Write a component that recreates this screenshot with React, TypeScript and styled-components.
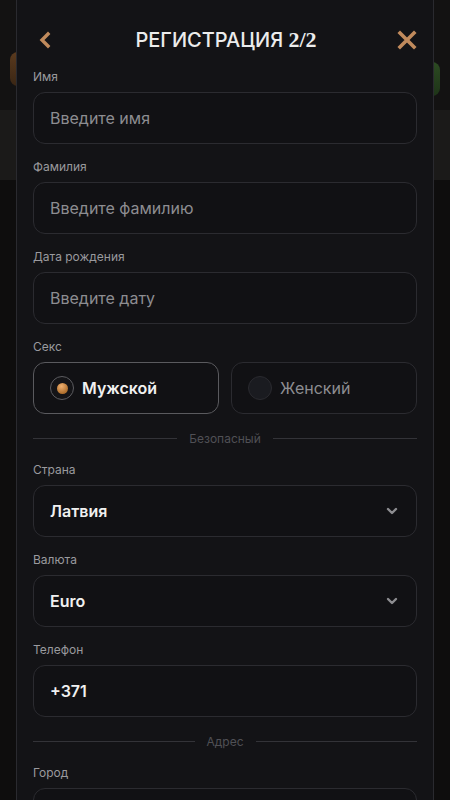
import React from "react";
import styled, { createGlobalStyle } from "styled-components";

const Global = createGlobalStyle`
  * { box-sizing: border-box; }
  html, body { margin: 0; padding: 0; background: #0e0d0d; overflow: hidden; }
  body { font-family: Inter, "Noto Sans", sans-serif; color: #e8e8e8; }
`;

const Page = styled.div`
  height: 800px;
  display: flex;
  flex-direction: column;
  background: #0e0d0d;
`;

const PageHeader = styled.div`
  height: 110px;
  background: #131212;
  display: flex;
  justify-content: space-between;
  padding: 24px 10px 0 10px;
`;

const HeaderSide = styled.div`
  display: flex;
  flex-direction: column;
  gap: 14px;
`;

const Dots = styled.div`
  color: #3a3a3a;
  font-size: 14px;
  line-height: 14px;
  padding-left: 4px;
`;

const BgButton = styled.div<{ $tone: "orange" | "green" }>`
  width: 60px;
  height: 34px;
  border-radius: 8px;
  margin-top: ${(p) => (p.$tone === "green" ? "38px" : "0")};
  background: ${(p) =>
    p.$tone === "orange"
      ? "linear-gradient(180deg,#5a3a1e,#3a2614)"
      : "linear-gradient(180deg,#2c4a22,#1e3418)"};
`;

const Band = styled.div`
  height: 70px;
  background: #1b1a19;
`;

const Overlay = styled.div`
  position: fixed;
  inset: 0;
  display: flex;
  justify-content: center;
`;

const Modal = styled.div`
  width: 418px;
  height: 100%;
  background: #131316;
  border-left: 1px solid #2a2a2f;
  border-right: 1px solid #2a2a2f;
  overflow: hidden;
  display: flex;
  flex-direction: column;
`;

const Header = styled.div`
  height: 80px;
  flex: none;
  display: flex;
  align-items: center;
  justify-content: space-between;
  padding: 0 15px 0 17px;
`;

const IconButton = styled.button`
  width: 22px;
  height: 22px;
  border: 0;
  padding: 0;
  background: transparent;
  display: flex;
  align-items: center;
  justify-content: center;
`;

const Title = styled.h1`
  margin: 0;
  font-size: 20px;
  font-weight: 500;
  letter-spacing: 0;
  color: #ececec;
  text-transform: uppercase;
`;

const TitleNum = styled.span`
  font-family: "Liberation Serif", "DejaVu Serif", serif;
  font-weight: 700;
  font-size: 22px;
`;

const Form = styled.div`
  display: flex;
  flex-direction: column;
  gap: 16px;
  padding: 0 16px;
  margin-top: -10px;
`;

const Field = styled.div`
  display: flex;
  flex-direction: column;
  gap: 8px;
`;

const Label = styled.label`
  font-size: 12px;
  line-height: 14px;
  color: #9a9a9e;
`;

const Box = styled.div`
  height: 52px;
  flex: none;
  border: 1px solid #2b2b30;
  border-radius: 12px;
  background: #111114;
  display: flex;
  align-items: center;
  justify-content: space-between;
  padding: 0 17px 0 16px;
`;

const Placeholder = styled.span`
  font-size: 16px;
  color: #8d8d91;
`;

const Value = styled.span`
  font-size: 16px;
  font-weight: 600;
  color: #f0f0f0;
`;

const Choices = styled.div`
  display: grid;
  grid-template-columns: 1fr 1fr;
  gap: 12px;
`;

const Choice = styled.div<{ $active?: boolean }>`
  height: 52px;
  border-radius: 12px;
  border: 1px solid ${(p) => (p.$active ? "#5a5a5e" : "#2b2b30")};
  background: #111114;
  display: flex;
  align-items: center;
  gap: 8px;
  padding-left: 16px;
`;

const Radio = styled.span<{ $active?: boolean }>`
  width: 24px;
  height: 24px;
  border-radius: 50%;
  border: 1px solid ${(p) => (p.$active ? "#5c5c60" : "#2a2a2f")};
  background: ${(p) => (p.$active ? "#141417" : "#1a1b20")};
  display: flex;
  align-items: center;
  justify-content: center;
  &::after {
    content: "";
    display: ${(p) => (p.$active ? "block" : "none")};
    width: 11px;
    height: 11px;
    border-radius: 50%;
    background: radial-gradient(circle at 40% 30%, #f0b070, #b0702e 70%);
  }
`;

const ChoiceText = styled.span<{ $active?: boolean }>`
  font-size: 16px;
  font-weight: ${(p) => (p.$active ? 600 : 400)};
  color: ${(p) => (p.$active ? "#f0f0f0" : "#8d8d91")};
`;

const Divider = styled.div`
  display: flex;
  align-items: center;
  gap: 12px;
  margin: 1px 0 1px;
  &::before, &::after {
    content: "";
    flex: 1;
    height: 1px;
    background: #333338;
  }
`;

const DividerText = styled.span`
  font-size: 12px;
  color: #505055;
`;

const Chevron = () => (
  <svg width="14" height="14" viewBox="0 0 14 14">
    <path d="M3 5l4 4 4-4" fill="none" stroke="#8d8d91" strokeWidth="2.4" strokeLinecap="round" strokeLinejoin="round" />
  </svg>
);

const TextField = ({ label, placeholder }: { label: string; placeholder: string }) => (
  <Field>
    <Label>{label}</Label>
    <Box>
      <Placeholder>{placeholder}</Placeholder>
    </Box>
  </Field>
);

const SelectField = ({ label, value, chevron = true }: { label: string; value: string; chevron?: boolean }) => (
  <Field>
    <Label>{label}</Label>
    <Box>
      <Value>{value}</Value>
      {chevron && <Chevron />}
    </Box>
  </Field>
);

export default function App() {
  return (
    <>
      <Global />
      <Page>
        <PageHeader>
          <HeaderSide>
            <Dots>⋮</Dots>
            <BgButton $tone="orange" />
          </HeaderSide>
          <HeaderSide>
            <BgButton $tone="green" />
          </HeaderSide>
        </PageHeader>
        <Band />
      </Page>
      <Overlay>
        <Modal>
          <Header>
            <IconButton aria-label="back">
              <svg width="14" height="18" viewBox="0 0 14 18">
                <path d="M10 3L4 9l6 6" fill="none" stroke="#c08a5c" strokeWidth="3.4" strokeLinecap="square" />
              </svg>
            </IconButton>
            <Title>
              Регистрация <TitleNum>2/2</TitleNum>
            </Title>
            <IconButton aria-label="close">
              <svg width="20" height="20" viewBox="0 0 20 20">
                <path d="M3 3l14 14M17 3L3 17" fill="none" stroke="#c08a5c" strokeWidth="3.6" strokeLinecap="square" />
              </svg>
            </IconButton>
          </Header>
          <Form>
            <TextField label="Имя" placeholder="Введите имя" />
            <TextField label="Фамилия" placeholder="Введите фамилию" />
            <TextField label="Дата рождения" placeholder="Введите дату" />
            <Field>
              <Label>Секс</Label>
              <Choices>
                <Choice $active>
                  <Radio $active />
                  <ChoiceText $active>Мужской</ChoiceText>
                </Choice>
                <Choice>
                  <Radio />
                  <ChoiceText>Женский</ChoiceText>
                </Choice>
              </Choices>
            </Field>
            <Divider>
              <DividerText>Безопасный</DividerText>
            </Divider>
            <SelectField label="Страна" value="Латвия" />
            <SelectField label="Валюта" value="Euro" />
            <SelectField label="Телефон" value="+371" chevron={false} />
            <Divider>
              <DividerText>Адрес</DividerText>
            </Divider>
            <Field>
              <Label>Город</Label>
              <Box />
            </Field>
          </Form>
        </Modal>
      </Overlay>
    </>
  );
}
